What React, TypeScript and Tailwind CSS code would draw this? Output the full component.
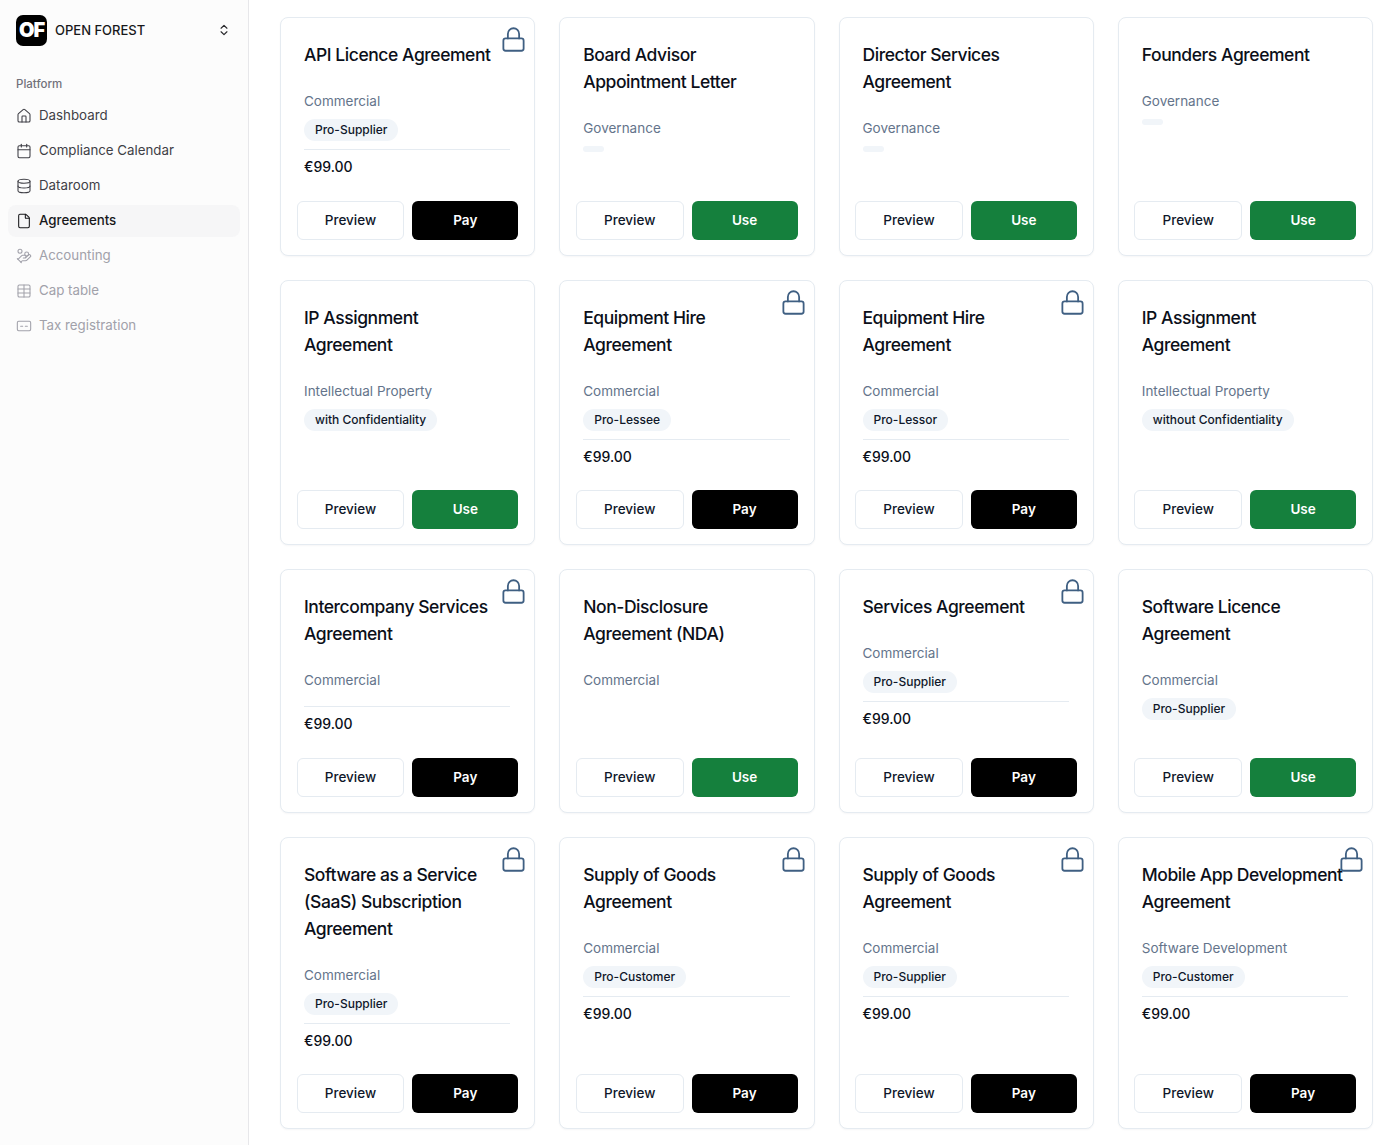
import React from 'react';
import { ChevronsUpDown, House, Calendar, Database, File, HandCoins, Table, Lock } from 'lucide-react';

type Agreement = {
  title: string;
  category: string;
  chip?: string;
  emptyChip?: boolean;
  locked?: boolean;
};

const ROWS: Agreement[][] = [
  [
    { title: 'API Licence Agreement', category: 'Commercial', chip: 'Pro-Supplier', locked: true },
    { title: 'Board Advisor Appointment Letter', category: 'Governance', emptyChip: true },
    { title: 'Director Services Agreement', category: 'Governance', emptyChip: true },
    { title: 'Founders Agreement', category: 'Governance', emptyChip: true },
  ],
  [
    { title: 'IP Assignment Agreement', category: 'Intellectual Property', chip: 'with Confidentiality' },
    { title: 'Equipment Hire Agreement', category: 'Commercial', chip: 'Pro-Lessee', locked: true },
    { title: 'Equipment Hire Agreement', category: 'Commercial', chip: 'Pro-Lessor', locked: true },
    { title: 'IP Assignment Agreement', category: 'Intellectual Property', chip: 'without Confidentiality' },
  ],
  [
    { title: 'Intercompany Services Agreement', category: 'Commercial', locked: true },
    { title: 'Non-Disclosure Agreement (NDA)', category: 'Commercial' },
    { title: 'Services Agreement', category: 'Commercial', chip: 'Pro-Supplier', locked: true },
    { title: 'Software Licence Agreement', category: 'Commercial', chip: 'Pro-Supplier' },
  ],
  [
    { title: 'Software as a Service (SaaS) Subscription Agreement', category: 'Commercial', chip: 'Pro-Supplier', locked: true },
    { title: 'Supply of Goods Agreement', category: 'Commercial', chip: 'Pro-Customer', locked: true },
    { title: 'Supply of Goods Agreement', category: 'Commercial', chip: 'Pro-Supplier', locked: true },
    { title: 'Mobile App Development Agreement', category: 'Software Development', chip: 'Pro-Customer', locked: true },
  ],
];

// Card with two dashes, the tax registration glyph
const TaxIcon: React.FC<{ size?: number; strokeWidth?: number }> = ({ size = 16, strokeWidth = 1.6 }) => (
  <svg width={size} height={size} viewBox="0 0 24 24" fill="none" stroke="currentColor" strokeWidth={strokeWidth} strokeLinecap="round">
    <rect x="2" y="5" width="20" height="14" rx="2" />
    <path d="M7 12.5h3M14 12.5h3" />
  </svg>
);

const NAV = [
  { label: 'Dashboard', icon: House },
  { label: 'Compliance Calendar', icon: Calendar },
  { label: 'Dataroom', icon: Database },
  { label: 'Agreements', icon: File, active: true },
  { label: 'Accounting', icon: HandCoins, muted: true },
  { label: 'Cap table', icon: Table, muted: true },
  { label: 'Tax registration', icon: TaxIcon, muted: true },
];

const Card: React.FC<{ item: Agreement }> = ({ item }) => (
  <div className="relative flex flex-col rounded-lg border border-[#e5ebf1] bg-white shadow-[0_1px_2px_rgba(15,23,42,0.04)]">
    {item.locked && (
      <Lock size={27} strokeWidth={1.6} className="absolute right-[7px] top-[8px] text-[#3f5f82]" />
    )}
    <div className="flex-1 pl-[23px] pr-6 pt-[23px]">
      <h3 className="text-[17.5px] font-medium leading-[27px] tracking-[-0.025em] text-[#0b0f19]">{item.title}</h3>
      <p className="mt-[23px] text-[13.5px] leading-5 text-[#64748b]">{item.category}</p>
      {item.chip && (
        <span className="mt-[8px] block w-fit rounded-full bg-[#f1f5f9] px-[11px] text-[12px] font-medium leading-[22px] text-[#0f172a]">
          {item.chip}
        </span>
      )}
      {item.emptyChip && <div className="mt-[8px] h-[6px] w-[21px] rounded-full bg-[#f1f5f9]" />}
      {item.locked && (
        <div className={item.chip ? 'mt-2 border-t border-[#e5ebf1] pt-[7px]' : 'mt-[16px] border-t border-[#e5ebf1] pt-[7px]'}>
          <p className="text-[14px] font-medium leading-5 text-[#0b0f19]">€99.00</p>
        </div>
      )}
    </div>
    <div className="mt-[23.5px] flex gap-2 pb-[15px] pl-[15.5px] pr-4">
      <button className="h-[39px] flex-1 rounded-md border border-[#e5ebf1] bg-white text-[13.5px] font-medium text-[#0f172a]">
        Preview
      </button>
      {item.locked ? (
        <button className="h-[39px] flex-1 rounded-md bg-black text-[13.5px] font-semibold text-white">Pay</button>
      ) : (
        <button className="h-[39px] flex-1 rounded-md bg-[#15803d] text-[13.5px] font-semibold text-white">Use</button>
      )}
    </div>
  </div>
);

export default function App() {
  return (
    <div className="flex h-[1145px] overflow-hidden bg-white font-['Inter',sans-serif]">
      {/* Sidebar */}
      <aside className="w-[249px] flex-shrink-0 border-r border-[#e7e7ea] bg-[#fcfcfc] px-2">
        <div className="flex h-[60px] items-center pl-2 pr-[9px]">
          <div className="flex h-[31px] w-[31px] items-center justify-center rounded-[7px] bg-black text-[20px] font-black tracking-[-0.06em] text-white">
            OF
          </div>
          <span className="ml-[8px] flex-1 pt-px text-[13px] font-medium text-[#18181b]">OPEN FOREST</span>
          <ChevronsUpDown size={14} className="text-[#27272a]" />
        </div>
        <div className="mt-[16px] px-2 text-[11.5px] font-medium leading-4 text-[#71717a]">Platform</div>
        <nav className="mt-2 flex flex-col gap-[3px]">
          {NAV.map((n) => (
            <div
              key={n.label}
              className={`flex h-8 items-center gap-[7px] rounded-lg px-2 text-[13.3px] ${
                n.active ? 'bg-[#f6f6f7] font-medium text-[#18181b]' : n.muted ? 'text-[#a1a1aa]' : 'text-[#3f3f46]'
              }`}
            >
              <n.icon size={16} strokeWidth={1.6} />
              <span>{n.label}</span>
            </div>
          ))}
        </nav>
      </aside>

      {/* Cards */}
      <main className="flex-1 pl-[31px] pr-[27px] pt-[17px]">
        <div className="flex flex-col gap-6">
          {ROWS.map((row, i) => (
            <div key={i} className="grid grid-cols-4 gap-6">
              {row.map((item, j) => (
                <Card key={j} item={item} />
              ))}
            </div>
          ))}
        </div>
      </main>
    </div>
  );
}
